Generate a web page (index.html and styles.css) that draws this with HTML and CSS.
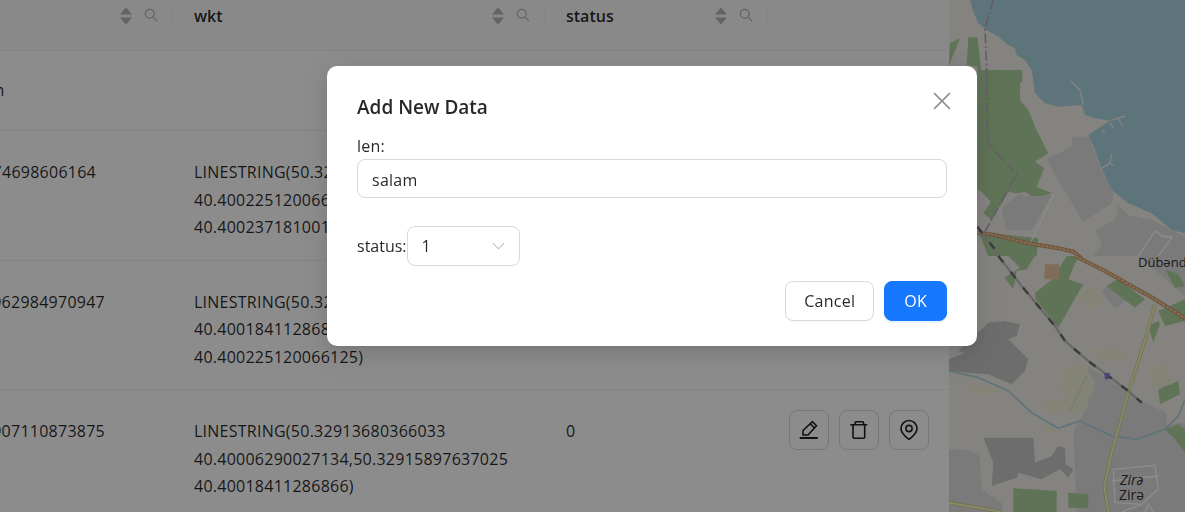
FILE: index.html
```html
<!DOCTYPE html>
<html lang="en">
<head>
<meta charset="UTF-8">
<title>Data</title>
<link rel="stylesheet" href="styles.css">
</head>

<body>
    <svg class="defs" width="0" height="0">
        <symbol id="i-sort" viewBox="0 0 12 18"><path d="M6 0.5 L12 7.5 H0Z M0 10.5 H12 L6 17.5Z"/></symbol>
        <symbol id="i-search" viewBox="0 0 16 16"><circle cx="6.6" cy="6.6" r="5"/><path d="M10.4 10.4 L15 15"/></symbol>
        <symbol id="i-edit" viewBox="0 0 40 40"><path d="M14 25 V20.5 L23.5 11.7 L27.5 15.7 L19 25Z M21.3 13.8 L25.3 17.8"/><path class="thick" d="M10.7 28 H28.7"/></symbol>
        <symbol id="i-trash" viewBox="0 0 40 40"><path d="M11.3 14.7 H28.3 M15.7 14.7 L16.7 11.7 H24 L25 14.7 M14 14.7 V27 Q14 28.3 15.3 28.3 H24.4 Q25.7 28.3 25.7 27 V14.7"/></symbol>
        <symbol id="i-pin" viewBox="0 0 40 40"><path d="M20 29.3 C20 29.3 12 24 12 18.5 A8 8 0 0 1 28 18.5 C28 24 20 29.3 20 29.3Z"/><circle cx="20" cy="18.5" r="3.1"/></symbol>
    </svg>

    <div class="page">
        <div class="table_wrap">
            <table class="data">
                <thead>
                    <tr>
                        <th class="col_len"><div class="th_in"><span class="th_name">len</span><svg class="sort"><use href="#i-sort"/></svg><svg class="find"><use href="#i-search"/></svg></div></th>
                        <th class="col_wkt"><div class="th_in"><span class="th_name">wkt</span><svg class="sort"><use href="#i-sort"/></svg><svg class="find"><use href="#i-search"/></svg></div></th>
                        <th class="col_status"><div class="th_in"><span class="th_name">status</span><svg class="sort"><use href="#i-sort"/></svg><svg class="find"><use href="#i-search"/></svg></div></th>
                        <th class="col_act"></th>
                    </tr>
                </thead>
                <tbody>
                    <tr class="row_short">
                        <td class="mid">salam</td>
                        <td></td>
                        <td></td>
                        <td></td>
                    </tr>
                    <tr>
                        <td class="num_a">50.3474698606164</td>
                        <td>LINESTRING(50.32915897637025<br>40.40022512006612,50.32923180366033<br>40.40023718100125)</td>
                        <td>1</td>
                        <td></td>
                    </tr>
                    <tr>
                        <td class="num_b">50.32962984970947</td>
                        <td>LINESTRING(50.32915897637025<br>40.40018411286866,50.32913680366033<br>40.400225120066125)</td>
                        <td>1</td>
                        <td></td>
                    </tr>
                    <tr>
                        <td class="num_b">50.32907110873875</td>
                        <td>LINESTRING(50.32913680366033<br>40.40006290027134,50.32915897637025<br>40.40018411286866)</td>
                        <td>0</td>
                        <td class="act_cell">
                            <div class="acts">
                                <button class="act"><svg><use href="#i-edit"/></svg></button>
                                <button class="act"><svg><use href="#i-trash"/></svg></button>
                                <button class="act"><svg><use href="#i-pin"/></svg></button>
                            </div>
                        </td>
                    </tr>
                </tbody>
            </table>
        </div>

        <div class="map">
            <svg viewBox="0 0 236 512" width="236" height="512">
                <rect width="236" height="512" fill="#f2efe9"/>
                <!-- top half, coords read from a 3x crop -->
                <g transform="translate(-4 0) scale(.33333)">
                    <path class="water" d="M75 0 L85 35 L100 70 L125 90 L160 110 L190 135 L210 145 L215 165 L240 180 L260 210 L270 280 L300 310 L340 320 L410 315 L420 345 L450 355 L495 362 L430 405 L450 450 L470 505 L500 570 L550 610 L620 640 L680 690 L720 700 L720 0Z"/>
                    <path class="green" d="M12 195 L15 130 L45 115 L15 190Z M70 112 H98 L108 210 H232 V245 L225 250 V300 L250 330 L275 390 L310 460 L270 485 L298 505 L275 560 L320 580 L270 595 L240 575 L215 580 L190 575 L140 660 L115 640 L138 605 L110 575 L97 570 V200 L65 195Z"/>
                    <path class="resi" d="M305 478 L380 440 V410 H430 L455 470 L470 510 L505 580 L500 610 L415 665 L350 560Z"/>
                    <path class="resi" d="M170 625 L225 580 L240 590 L320 585 L260 690 L185 690Z"/>
                    <path class="resi" d="M450 690 L510 660 L520 615 L550 645 L620 660 L720 710 V768 H440 L470 735Z"/>
                    <path class="green" d="M100 695 L280 715 L275 768 H130Z"/>
                    <path class="line_w" d="M325 585 L258 725 M580 768 L632 692 L650 708 L682 712 L640 768"/>
                    <path class="pier" d="M375 242 L405 270 L415 315 M495 362 L540 348 M495 368 L505 385 M520 355 L532 378 M470 390 L480 400 M500 460 L495 490 L470 505 M495 490 L505 497"/>
                    <path class="border" d="M145 0 L120 85 L125 200 L128 430 L215 522 L120 695"/>
                    <path class="road_case" d="M97 698 L150 705 L250 730 L340 745 L385 755 L410 775"/>
                    <path class="road" d="M97 698 L150 705 L250 730 L340 745 L385 755 L410 775"/>
                    <path class="rail_base" d="M97 680 L165 768"/>
                    <path class="rail" d="M97 680 L165 768"/>
                </g>
                <!-- bottom half -->
                <g transform="translate(-4 256) scale(.33333)">
                    <path class="resi" d="M430 330 L550 410 L620 450 L665 470 V505 L720 500 V768 H395 L385 530 L390 515 L430 450Z"/>
                    <path class="resi" d="M440 0 H580 L720 120 V0Z M470 105 L510 70 L570 110 L510 158Z"/>
                    <path class="green" d="M270 110 L320 72 L365 0 H400 L370 70 L415 85 L340 215 L272 130Z M190 0 H270 L245 40 L215 45 L205 100 L178 65 L225 35Z M485 90 L520 70 L600 130 L570 155Z M660 40 L700 55 L720 90 L690 95Z M640 195 L610 210 L625 258 L645 205Z M640 165 L720 130 V195 L660 210Z M640 400 L700 375 L705 415 L645 445Z M660 520 L700 505 L720 520 V590 L690 550Z"/>
                    <path class="tan" d="M300 25 H342 V70 H298Z"/>
                    <path class="farm" d="M390 125 L440 90 L480 130 L430 160Z M355 335 L410 318 L450 380 L440 420 L395 445 L345 405Z M450 280 L530 275 L540 320 L460 310Z M610 330 L670 325 L680 385 L620 395Z M280 440 L350 425 L425 445 L420 465 L310 470Z M80 385 L190 395 L130 415 L80 410Z M295 505 L325 500 L335 530 L300 530Z M45 625 H85 V640 H45Z M60 670 L105 665 V700 H55Z"/>
                    <path class="ind" d="M12 310 L60 290 L40 285 L130 200 L180 195 L225 205 L215 240 L190 250 L250 310 L240 345 L200 385 L130 355 L70 350 L12 345Z"/>
                    <path class="ind" d="M115 545 L265 545 L270 620 L320 600 L340 570 L360 575 L362 625 L385 640 L370 665 L345 640 L290 670 L220 650 L215 665 L140 690 L145 620Z"/>
                    <path class="resi" d="M12 580 L60 580 L105 600 L110 700 L170 740 L175 768 H12Z"/>
                    <path class="green" d="M205 697 L335 705 V768 H205Z M370 710 L430 715 V755 H370Z"/>
                    <path class="river" d="M12 345 L100 365 L190 405 L260 470 L340 517 L405 495 L500 540 L575 550 L660 520 L700 480 L720 430"/>
                    <path class="thin" d="M372 470 L425 360"/>
                    <path class="line_w" d="M505 640 L630 628 L640 700 L590 745 L510 740 L505 640 M500 675 L640 660 M530 768 L590 745 M600 768 L610 745 L625 768"/>
                    <path class="road_case" d="M390 0 L480 45 L630 130 L725 190"/>
                    <path class="road" d="M390 0 L480 45 L630 130 L725 190"/>
                    <path class="road_y_case" d="M630 145 L610 220 L550 410 L500 590 L478 690 L490 768"/>
                    <path class="road_y" d="M630 145 L610 220 L550 410 L500 590 L478 690 L490 768"/>
                    <path class="road_y_case" d="M12 740 L100 755 L170 768"/>
                    <path class="road_y" d="M12 740 L100 755 L170 768"/>
                    <path class="rail_base" d="M160 0 L230 90 L330 210 L360 255 L430 315 L550 405 L590 440"/>
                    <path class="rail" d="M160 0 L230 90 L330 210 L360 255 L430 315 L550 405 L590 440"/>
                    <path class="station" d="M478 352 H495 L490 370 H480Z"/>
                </g>
            </svg>
            <span class="place place_a">Dübəndi</span>
            <span class="place place_b">Zirə</span>
            <span class="place place_c">Zirə</span>
        </div>
    </div>

    <div class="mask"></div>

    <div class="modal">
        <button class="close"><svg viewBox="0 0 16 16" width="18" height="18"><path d="M1 1 L15 15 M15 1 L1 15"/></svg></button>
        <div class="modal_title">Add New Data</div>
        <div class="field">
            <label>len:</label>
            <div class="input">salam</div>
        </div>
        <div class="field_inline">
            <label>status:</label>
            <div class="select">
                <span>1</span>
                <svg viewBox="0 0 14 8" width="13" height="8"><path d="M1 1 L7 7 L13 1"/></svg>
            </div>
        </div>
        <div class="modal_foot">
            <button class="btn">Cancel</button>
            <button class="btn btn_primary">OK</button>
        </div>
    </div>
</body>
</html>
```

FILE: styles.css
```css
html,body{ width:100%; height:100%; padding:0; margin:0; overflow:hidden;}
body{ font-family:"Open Sans","Liberation Sans",sans-serif; font-size:16px; letter-spacing:.25px; color:rgba(0,0,0,.85); background:#fff;}
.defs{ position:absolute;}
.page{ display:flex; height:512px;}

.table_wrap{ width:949px; height:512px; overflow:hidden; flex:none;}
.data{ width:1149px; margin-left:-200px; border-collapse:collapse; table-layout:fixed;}
.col_len{ width:373px;}
.col_wkt{ width:372px;}
.col_status{ width:223px;}
.col_act{ width:181px;}
.data th{ height:50px; padding:0; background:#fafafa; border-bottom:1px solid #f0f0f0; vertical-align:top; text-align:left; font-weight:600; letter-spacing:0;}
.th_in{ display:flex; align-items:center; height:25px; margin-top:3px; padding:0 14px 0 21px; border-right:1px solid #f0f0f0;}
.th_name{ flex:1;}
.sort{ width:12px; height:18px; fill:#b5b5b5; margin-right:12px;}
.find{ width:14px; height:14px; margin-top:-2px; fill:none; stroke:#b0b0b0; stroke-width:1.3;}
.data td{ padding:28px 21px 18px; border-bottom:1px solid #f0f0f0; line-height:27.5px; vertical-align:top;}
.data td.mid{ padding:0 0 0 159px; vertical-align:middle;}
.data td.num_a{ padding-left:0; text-align:right; padding-right:77px;}
.data td.num_b{ padding-left:0; text-align:right; padding-right:68px;}
.data td.act_cell{ padding-right:20px;}
.row_short td{ height:79px; padding:0;}
.acts{ display:flex; justify-content:flex-end; gap:10px; margin:-8px 0 0;}
.act{ width:40px; height:40px; padding:0; background:#fff; border:1px solid #d9d9d9; border-radius:8px; display:flex; align-items:center; justify-content:center;}
.act svg{ width:40px; height:40px; flex:none; fill:none; stroke:#1f1f1f; stroke-width:1.6; stroke-linejoin:round;}
.thick{ stroke-width:2;}

.map{ width:236px; height:512px; position:relative; overflow:hidden; flex:none;}
.map svg{ display:block; filter:blur(.5px);}
.water{ fill:#aad3df;}
.green{ fill:#add19e;}
.resi{ fill:#e0dfdf;}
.ind{ fill:#c6c6c6;}
.tan{ fill:#e8c6a5;}
.farm{ fill:#eef0d5;}
.river{ fill:none; stroke:#aad3df; stroke-width:5;}
.thin{ fill:none; stroke:#c8c8c8; stroke-width:2;}
.pier{ fill:none; stroke:#f2efe9; stroke-width:4;}
.line_w{ fill:none; stroke:#fff; stroke-width:4;}
.border{ fill:none; stroke:#b7a8ba; stroke-width:5; stroke-dasharray:30 8 6 8;}
.road_case{ fill:none; stroke:#c99a6c; stroke-width:12;}
.road{ fill:none; stroke:#f0c998; stroke-width:6; stroke-dasharray:10 3;}
.road_y_case{ fill:none; stroke:#c8c77e; stroke-width:10; stroke-linejoin:round;}
.road_y{ fill:none; stroke:#f7fabf; stroke-width:6; stroke-linejoin:round;}
.rail_base{ fill:none; stroke:#bdbdbd; stroke-width:7;}
.rail{ fill:none; stroke:#6b6b6b; stroke-width:7; stroke-dasharray:24 36;}
.station{ fill:#7a81d8;}
.place{ position:absolute; font-size:14px; line-height:14px; letter-spacing:0; color:#333; white-space:nowrap;}
.place_a{ left:189px; top:255px; font-size:13px;}
.place_b{ left:171px; top:473px; font-style:italic;}
.place_c{ left:170px; top:488px;}

.mask{ position:fixed; inset:0; background:rgba(0,0,0,.45);}
.modal{ position:absolute; left:327px; top:66px; width:650px; height:280px; box-sizing:border-box; padding:29px 30px 25px; background:#fff; border-radius:10px; box-shadow:0 6px 16px rgba(0,0,0,.08),0 3px 6px -4px rgba(0,0,0,.12),0 9px 28px 8px rgba(0,0,0,.05);}
.modal_title{ font-size:19px; line-height:24px; font-weight:600; letter-spacing:0; height:24px; margin-bottom:15px;}
.close{ position:absolute; right:26px; top:26px; width:18px; height:18px; padding:0; background:none; border:none;}
.close svg{ display:block; fill:none; stroke:#8c8c8c; stroke-width:1.3;}
.field label{ display:block; line-height:24px; height:24px; margin-bottom:1px;}
.input{ height:39px; box-sizing:border-box; border:1px solid #d9d9d9; border-radius:8px; padding:0 14px; line-height:41px;}
.field_inline{ display:flex; align-items:center; margin-top:28px; letter-spacing:0;}
.select{ width:113px; height:40px; box-sizing:border-box; border:1px solid #d9d9d9; border-radius:8px; padding:0 14px; display:flex; align-items:center; justify-content:space-between;}
.select svg{ fill:none; stroke:#bfbfbf; stroke-width:1.2;}
.modal_foot{ display:flex; justify-content:flex-end; gap:10px; margin-top:15px;}
.btn{ height:40px; padding:0 18px; font:inherit; letter-spacing:.25px; color:rgba(0,0,0,.85); background:#fff; border:1px solid #d9d9d9; border-radius:8px; box-shadow:0 2px 0 rgba(0,0,0,.02);}
.btn_primary{ padding:0 19px; color:#fff; background:#1677ff; border-color:#1677ff; box-shadow:0 2px 0 rgba(5,145,255,.1);}
```
